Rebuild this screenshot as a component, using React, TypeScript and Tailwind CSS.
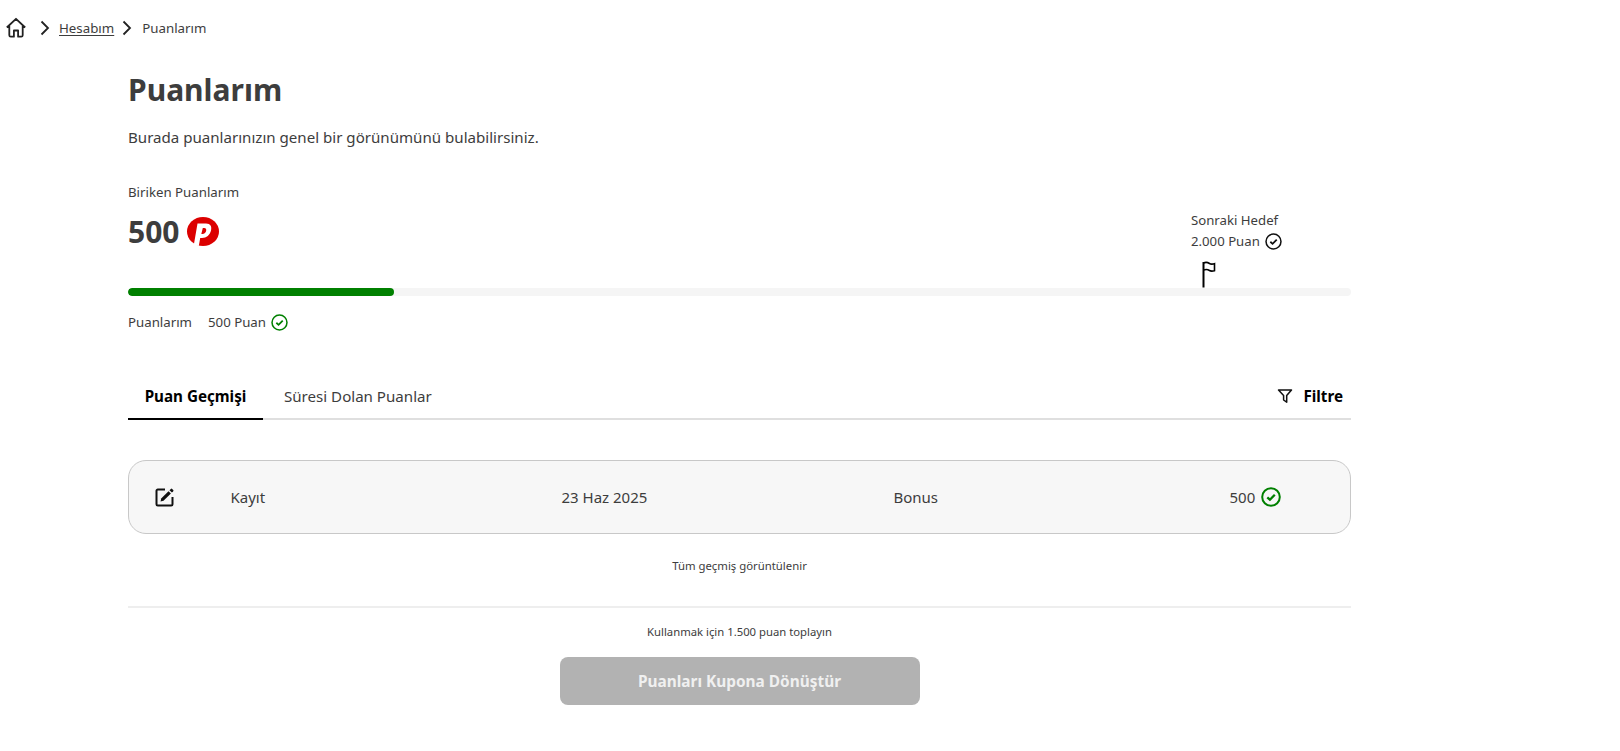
import React from "react";

const Chevron = () => (
  <svg width="12" height="16" viewBox="0 0 12 16" fill="none" stroke="#222" strokeWidth="1.8">
    <path d="M2.5 1.5 9 8l-6.500 6.500" />
  </svg>
);

const Check = ({ size, color, sw = 1.5 }: { size: number; color: string; sw?: number }) => (
  <svg width={size} height={size} viewBox="0 0 20 20" fill="none" stroke={color} strokeWidth={sw}>
    <circle cx="10" cy="10" r="8.800" />
    <path d="M6.300 10.300 8.900 12.700 13.800 7.700" strokeWidth={sw + 0.3} />
  </svg>
);

export default function App() {
  return (
    <div className="min-h-[751px] bg-white text-[#3d3d3d] font-['Noto_Sans',sans-serif]">
      <nav className="flex items-center h-[54px] pl-[6px] text-[13.300px]">
        <svg width="20" height="21" viewBox="0 0 20 21" fill="none" stroke="#222" strokeWidth="1.800" strokeLinejoin="round">
          <path d="M.8 10.500 10 1.800l9.200 8.700M3.300 8.300v9.900a1.500 1.500 0 0 0 1.500 1.500h3.100v-6.200h4.200v6.200h3.100a1.500 1.500 0 0 0 1.500-1.500V8.300" />
        </svg>
        <span className="ml-[13px] flex pt-[1px]"><Chevron /></span>
        <a className="ml-[8px] underline underline-offset-2 pt-[3px]">Hesabım</a>
        <span className="ml-[7px] flex pt-[1px]"><Chevron /></span>
        <span className="ml-[9px] pt-[3px]">Puanlarım</span>
      </nav>

      <main className="ml-[128px] w-[1223px]">
        <h1 className="mt-[11px] text-[30px] leading-[50px] font-bold">Puanlarım</h1>
        <p className="mt-[10px] text-[15.100px] leading-[24px]">Burada puanlarınızın genel bir görünümünü bulabilirsiniz.</p>

        <div className="mt-[33px] flex justify-between items-start h-[106px]">
          <div>
            <div className="text-[13.250px] leading-[20px]">Biriken Puanlarım</div>
            <div className="mt-[8px] flex items-center gap-[8px]">
              <span className="text-[30px] leading-[44px] font-bold">500</span>
              <svg width="32" height="29" viewBox="0 0 32 29" className="mt-[-2px]">
                <ellipse cx="16" cy="14.500" rx="16" ry="14.500" fill="#dc0000" />
                <path fillRule="evenodd" fill="#ffffff" d="M10.500 6.500H19c4.500 0 6 3 5 7-1 4.500-4.500 7.500-9 7.500h-1.800l-1.400 8L6.800 28 10.500 6.500Zm5.300 4.500-1.500 6h1.200c2 0 3.300-1.500 3.700-3.500.3-1.500-.4-2.500-2-2.500h-1.400Z" />
              </svg>
            </div>
          </div>
          <div className="mr-[67px] w-[93px] relative">
            <div className="mt-[28px] text-[13.200px] leading-[21px]">Sonraki Hedef</div>
            <div className="flex items-center gap-[5px] text-[13.200px] leading-[21px]">
              2.000 Puan <Check size={17} color="#111" sw={1.800} />
            </div>
            <svg className="absolute left-[11px] top-[79px]" width="15" height="27" viewBox="0 0 15 27" fill="none" stroke="#000">
              <path d="M1.500 26.500V1" strokeWidth="2" />
              <path d="M1.500 2c3-1.500 4.500-.5 6 .5s3 .8 5 .2v7c-2 .5-3.500.8-5-.2s-3-1.500-6-.5" strokeWidth="1.600" />
            </svg>
          </div>
        </div>

        <div className="h-[8px] rounded-full bg-[#f5f5f5] overflow-hidden">
          <div className="h-full w-[266px] rounded-full bg-[#008000]" />
        </div>

        <div className="mt-[16px] flex items-center text-[13.250px] leading-[20px]">
          <span>Puanlarım</span>
          <span className="ml-[16px]">500 Puan</span>
          <span className="ml-[5px] flex"><Check size={17} color="#008000" sw={1.800} /></span>
        </div>

        <div className="mt-[44px] flex border-b-2 border-[#dfdfdf] h-[44px] items-stretch">
          <div className="w-[135px] -mb-[2px] border-b-2 border-black flex items-center justify-center text-[15.200px] font-bold text-black pb-[2px]">Puan Geçmişi</div>
          <div className="ml-[21px] flex items-center text-[15.100px] pb-[2px]">Süresi Dolan Puanlar</div>
          <div className="ml-auto mr-[8px] flex items-center text-[15.200px] font-bold text-black pb-[2px]">
            <svg width="16" height="16" viewBox="0 0 16 16" fill="none" stroke="#111" strokeWidth="1.500" className="mr-[10px]">
              <path d="M1.500 2h13L9.700 7.600v6.600L6.600 12V7.600L1.500 2Z" strokeLinejoin="round" />
            </svg>
            Filtre
          </div>
        </div>

        <div className="mt-[40px] h-[74px] rounded-[18px] border border-[#c8c8c8] bg-[#f7f7f7] flex items-center text-[15px]">
          <span className="ml-[26px] w-[75.500px] flex">
            <svg width="20" height="20" viewBox="0 0 20 20" fill="none">
              <path d="M10 2.500H2.800A1.300 1.300 0 0 0 1.500 3.800v13.400a1.300 1.300 0 0 0 1.300 1.300h13.400a1.300 1.300 0 0 0 1.300-1.300V10" stroke="#111" strokeWidth="2" />
              <path d="M5.500 14.500l.7-3L13.500 4.200l2.400 2.400L8.500 13.800l-3 .7Z" fill="#111" />
              <path d="M14.500 3.200l1.300-1.300a1 1 0 0 1 1.400 0l1 1a1 1 0 0 1 0 1.400L16.900 5.600 14.500 3.200Z" fill="#111" />
            </svg>
          </span>
          <span className="w-[331px]">Kayıt</span>
          <span className="w-[332px]">23 Haz 2025</span>
          <span className="w-[336px]">Bonus</span>
          <span className="flex items-center gap-[6px]">500 <Check size={20} color="#008000" sw={2} /></span>
        </div>

        <p className="mt-[23px] text-center text-[11.350px] leading-[18px]">Tüm geçmiş görüntülenir</p>

        <div className="mt-[31px] h-[2px] bg-[#eeeeee]" />

        <p className="mt-[15px] text-center text-[11.300px] leading-[18px]">Kullanmak için 1.500 puan toplayın</p>

        <button className="block mx-auto mt-[16px] w-[360px] h-[48px] rounded-[8px] bg-[#b2b2b2] text-[#f0f0f0] text-[15.400px] font-bold pt-[1px]">Puanları Kupona Dönüştür</button>
      </main>
    </div>
  );
}
